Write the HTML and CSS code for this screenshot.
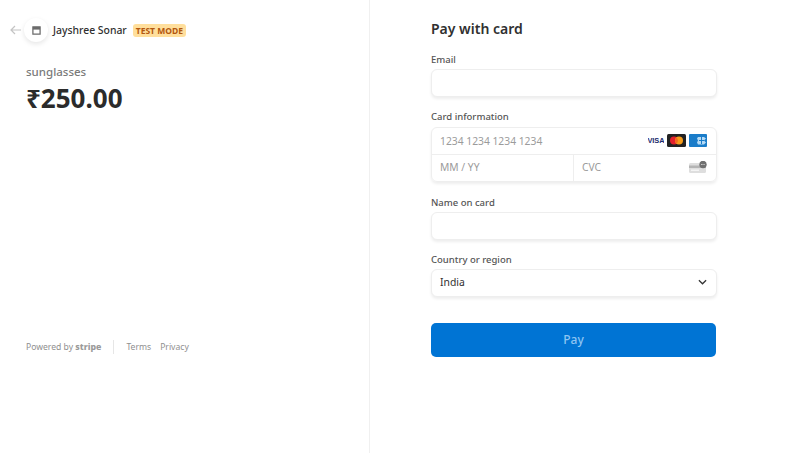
FILE: index.html
```html
<!DOCTYPE html>
<html lang="en">
<head>
    <meta charset="UTF-8">
    <meta name="viewport" content="width=device-width, initial-scale=1.0">
    <title>Pay with card</title>
    <link rel="stylesheet" href="styles.css">
</head>
<body>
    <div class="left">
        <div class="header">
            <svg class="back" width="11" height="10" viewBox="0 0 11 10">
                <path d="M5 1 1 5l4 4M1 5h10" fill="none" stroke="#c4c4c4" stroke-width="1.2"/>
            </svg>
            <div class="logo">
                <svg width="9" height="9" viewBox="0 0 10 10">
                    <path d="M1 1h8v8H1z" fill="#fff" stroke="#6b6b6b" stroke-width="1.4"/>
                    <path d="M1 1h8v3H1z" fill="#6b6b6b"/>
                </svg>
            </div>
            <span class="merchant">Jayshree Sonar</span>
            <span class="badge">TEST MODE</span>
        </div>
        <p class="product">sunglasses</p>
        <p class="price">₹250.00</p>
        <div class="footer">
            <span>Powered by <b class="stripe">stripe</b></span>
            <span class="divider"></span>
            <span class="link">Terms</span>
            <span class="link">Privacy</span>
        </div>
    </div>
    <div class="right">
        <h2>Pay with card</h2>
        <label class="first">Email</label>
        <div class="field"></div>

        <label class="card-label">Card information</label>
        <div class="card-group">
            <div class="card-row">
                <span class="placeholder">1234 1234 1234 1234</span>
                <div class="brands">
                    <svg width="16" height="13" viewBox="0 0 16 13">
                        <rect width="16" height="13" fill="#fff"/>
                        <text x="8" y="9.3" text-anchor="middle" class="visa">VISA</text>
                    </svg>
                    <svg width="19" height="13" viewBox="0 0 19 13">
                        <rect width="19" height="13" rx="1.5" fill="#222"/>
                        <circle cx="7" cy="6.5" r="4" fill="#e3202c"/>
                        <circle cx="12" cy="6.5" r="4" fill="#f59c1a"/>
                        <path d="M9.5 3.4a4 4 0 0 1 0 6.2 4 4 0 0 1 0-6.2z" fill="#f4671f"/>
                    </svg>
                    <svg width="18" height="13" viewBox="0 0 18 13">
                        <rect width="18" height="13" rx="1" fill="#1a7cc9"/>
                        <path d="M9 3h6l2 1.5-2 2 2 2-2 2H9l-1-2 1-2-1-2z" fill="#b5daf5"/>
                        <path d="M10 6.5h5M12.5 3v7" stroke="#1a7cc9" stroke-width="1"/>
                    </svg>
                </div>
            </div>
            <div class="card-row split">
                <div class="half"><span class="placeholder">MM / YY</span></div>
                <div class="half cvc">
                    <span class="placeholder">CVC</span>
                    <svg width="18" height="12" viewBox="0 0 18 12">
                        <rect x="0" y="2" width="17" height="10" rx="1.5" fill="#dedede"/>
                        <rect x="0" y="4.5" width="17" height="2.5" fill="#b4b4b4"/>
                        <rect x="2" y="8.5" width="8" height="1.5" fill="#f4f4f4"/>
                        <circle cx="14" cy="3.5" r="3.7" fill="#707070"/>
                        <path d="M12.2 3.5h3.6" stroke="#ddd" stroke-width="1.2" stroke-dasharray="0.8 .5"/>
                    </svg>
                </div>
            </div>
        </div>

        <label class="name-label">Name on card</label>
        <div class="field"></div>

        <label class="country-label">Country or region</label>
        <div class="field select">
            <span>India</span>
            <svg width="9" height="6" viewBox="0 0 10 6">
                <path d="M1 1l4 4 4-4" fill="none" stroke="#333" stroke-width="1.4"/>
            </svg>
        </div>

        <button class="pay">Pay</button>
    </div>
</body>
</html>
```

FILE: styles.css
```css
html, body {
    height: 100%;
}

body {
    margin: 0;
    display: flex;
    height: 453px;
    overflow: hidden;
    background-color: #fff;
    font-family: "Noto Sans", "Open Sans", sans-serif;
    color: #303030;
}

p {
    margin: 0;
}

.left {
    width: 370px;
    height: 453px;
    box-sizing: border-box;
    border-right: 1px solid #f0f0f0;
    padding: 17px 0 0 10px;
    display: flex;
    flex-direction: column;
}

.header {
    display: flex;
    align-items: center;
    height: 26px;
}

.back {
    margin-right: 3px;
}

.logo {
    width: 24px;
    height: 24px;
    border-radius: 50%;
    background-color: #fff;
    box-shadow: 0 2px 5px rgba(0, 0, 0, 0.1);
    display: flex;
    align-items: center;
    justify-content: center;
}

.merchant {
    margin-left: 5px;
    font-size: 10.4px;
    font-weight: 500;
    color: #303030;
}

.badge {
    margin-left: 6px;
    padding: 0 3px;
    height: 13px;
    line-height: 13px;
    border-radius: 3px;
    background-color: #ffdf9c;
    color: #b3570f;
    font-size: 8.5px;
    font-weight: 700;
    white-space: nowrap;
}

.product {
    margin: 20px 0 0 16px;
    font-size: 11.5px;
    line-height: 18px;
    font-weight: 500;
    color: #7a7a7a;
}

.price {
    margin: 1px 0 0 16px;
    font-size: 26px;
    line-height: 32px;
    font-weight: 700;
    color: #2b2b2b;
}

.footer {
    margin: 226px 0 0 16px;
    display: flex;
    align-items: center;
    font-size: 8.6px;
    line-height: 14px;
    color: #8f8f8f;
}

.stripe {
    font-size: 8.8px;
    font-weight: 800;
    color: #9a9a9a;
}

.divider {
    width: 1px;
    height: 14px;
    margin: 0 12px;
    background-color: #e6e6e6;
}

.link {
    margin-right: 9px;
}

.right {
    width: 286px;
    margin-left: 61px;
    padding-top: 19px;
}

h2 {
    margin: 0;
    font-size: 14px;
    line-height: 20px;
    font-weight: 600;
    color: #303030;
}

label {
    display: block;
    font-size: 9.5px;
    line-height: 13px;
    font-weight: 500;
    color: #555;
}

.first {
    margin: 14px 0 3px;
}

.card-label {
    margin: 13px 0 4px;
}

.name-label {
    margin: 14px 0 3px;
}

.country-label {
    margin: 13px 0 3px;
}

.field {
    height: 28px;
    box-sizing: border-box;
    border: 1px solid #eeeeee;
    border-radius: 6px;
    background-color: #fff;
    box-shadow: 0 2px 3px rgba(0, 0, 0, 0.07);
}

.select {
    display: flex;
    align-items: center;
    justify-content: space-between;
    padding: 0 9px 2px 8px;
    font-size: 10.4px;
    color: #303030;
}

.card-group {
    height: 55px;
    box-sizing: border-box;
    border: 1px solid #eeeeee;
    border-radius: 6px;
    box-shadow: 0 2px 3px rgba(0, 0, 0, 0.07);
}

.card-row {
    height: 26px;
    box-sizing: border-box;
    display: flex;
    align-items: center;
    justify-content: space-between;
    padding: 0 9px 1px 8px;
    font-size: 10.3px;
}

.card-row.split {
    height: 27px;
    padding: 0;
    border-top: 1px solid #eeeeee;
}

.placeholder {
    color: #9b9b9b;
}

.brands {
    display: flex;
    align-items: center;
    gap: 3px;
}

.visa {
    font-family: "Liberation Sans", sans-serif;
    font-size: 7.4px;
    font-weight: 700;
    fill: #1a2a6c;
}

.half {
    width: 141px;
    height: 100%;
    box-sizing: border-box;
    padding: 0 0 2px 8px;
    display: flex;
    align-items: center;
    justify-content: space-between;
}

.cvc {
    flex: 1;
    border-left: 1px solid #eeeeee;
    padding-right: 9px;
}

.pay {
    display: block;
    width: 285px;
    height: 34px;
    margin-top: 26px;
    padding: 0 0 2px;
    border: none;
    border-radius: 5px;
    background-color: #0074d4;
    color: #8ec5f2;
    font-family: inherit;
    font-size: 12px;
    font-weight: 500;
}
```
